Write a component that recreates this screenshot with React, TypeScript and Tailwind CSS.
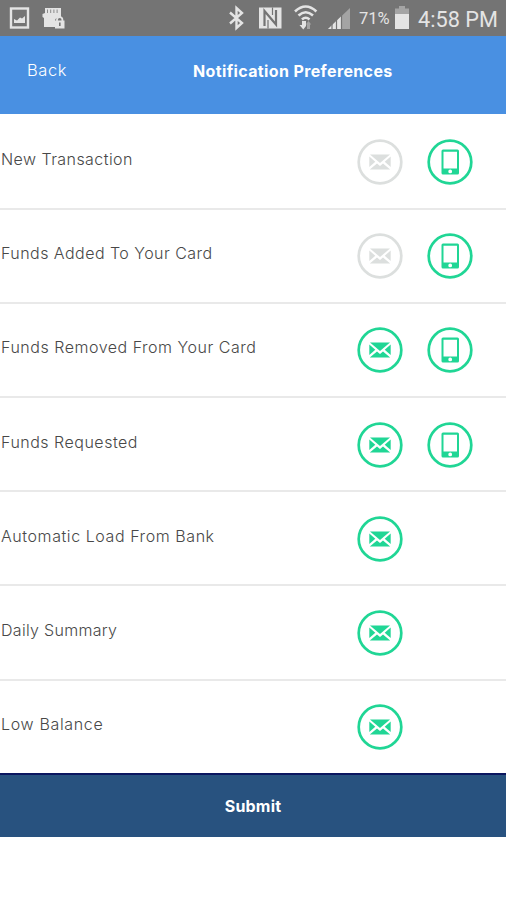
import React from "react";

interface Preference {
  label: string;
  tracking: string;
  email: boolean;
  phone: boolean;
}

const preferences: Preference[] = [
  { label: "New Transaction", tracking: "tracking-[0.44px]", email: false, phone: true },
  { label: "Funds Added To Your Card", tracking: "tracking-[0.46px]", email: false, phone: true },
  { label: "Funds Removed From Your Card", tracking: "tracking-[0.52px]", email: true, phone: true },
  { label: "Funds Requested", tracking: "tracking-[0.5px]", email: true, phone: true },
  { label: "Automatic Load From Bank", tracking: "tracking-[0.57px]", email: true, phone: false },
  { label: "Daily Summary", tracking: "tracking-[0.3px]", email: true, phone: false },
  { label: "Low Balance", tracking: "tracking-[0.66px]", email: true, phone: false },
];

const MailIcon = () => (
  <svg width="46" height="46" viewBox="0 0 46 46" fill="none">
    <circle cx="23" cy="23" r="21.3" stroke="currentColor" strokeWidth="2.7" />
    <path d="M13 15.5H33L23 24Z" fill="currentColor" />
    <path d="M12.3 17.5L18.300 22.800L12.300 28Z" fill="currentColor" />
    <path d="M33.700 17.500L27.700 22.800L33.700 28Z" fill="currentColor" />
    <path d="M12.800 30.500L20 24.400L23 27L26 24.400L33.200 30.500Z" fill="currentColor" />
  </svg>
);

const PhoneIcon = () => (
  <svg width="46" height="46" viewBox="0 0 46 46" fill="none">
    <circle cx="23" cy="23" r="21.3" stroke="currentColor" strokeWidth="2.7" />
    <path
      fillRule="evenodd"
      d="M16 10.500H30.500Q32 10.500 32 12V34Q32 35.500 30.500 35.500H16Q14.500 35.500 14.500 34V12Q14.500 10.500 16 10.500ZM16.500 12.800V29.500H30V12.800ZM23.200 30.500A1.900 1.900 0 1 0 23.200 34.300A1.900 1.900 0 1 0 23.200 30.500Z"
      fill="currentColor"
    />
  </svg>
);

const StatusBar = () => (
  <div className="flex h-9 items-center bg-[#747474] text-[#e4e4e4]">
    <svg width="72" height="36" viewBox="0 0 72 36" fill="none">
      {/* gallery */}
      <rect x="11" y="8.5" width="17" height="19" stroke="currentColor" strokeWidth="2.4" />
      <path d="M14 23V19L17 20.5L20 17.5L22 18.5L25 16V23Z" fill="currentColor" />
      {/* sd card with lock */}
      <path d="M45 8H61V17.5H59Q55 17.5 55 21V27H44V18L42.5 17V14L45 13Z" fill="currentColor" />
      <path d="M47.5 9.500V13M50.700 9.500V13M53.900 9.500V13M57.100 9.500V13" stroke="#8c8c8c" strokeWidth="1" />
      <path d="M57 21V19.8A2.7 2.7 0 0 1 62.4 19.8V21" stroke="currentColor" strokeWidth="1.8" />
      <rect x="55" y="20.5" width="9.5" height="8" fill="currentColor" />
      <path d="M59.8 22.5V26" stroke="#747474" strokeWidth="1.6" />
    </svg>

    <svg className="ml-auto shrink-0" width="130" height="36" viewBox="222 0 130 36" fill="none">
      {/* bluetooth */}
      <path d="M230 12.5L242 23L236.5 28V8L242 13L230 23.5" stroke="currentColor" strokeWidth="2.4" />
      {/* nfc */}
      <rect x="259" y="7.5" width="22.5" height="21" fill="currentColor" />
      <path d="M264.5 26V11L276 24.5V10" stroke="#747474" strokeWidth="2.2" />
      <path d="M268 28.5V20M272.5 7.5V15" stroke="#747474" strokeWidth="1.2" />
      {/* wifi */}
      <path
        d="M295 11.500Q305.700 1.500 316.400 11.500M298.500 15.500Q305.700 9 313 15.500M302 19.500Q305.700 16 309.500 19.500"
        stroke="currentColor"
        strokeWidth="2.6"
      />
      <path d="M302 21V25H299.500L303.300 29.500L306 26V21Z" fill="currentColor" />
      <path d="M307 29V24.500H305.800L308.500 21L311.200 24.500H310V29Z" fill="#a4a4a4" />
      {/* signal */}
      <path d="M328 29L350 8V29Z" fill="#a4a4a4" />
      <path d="M328 29L341 16.600V29Z" fill="currentColor" />
      <path d="M332 20V30M336.500 16V30M341.500 12V30" stroke="#747474" strokeWidth="1.2" />
    </svg>

    <span className="ml-[7px] w-[32px] shrink-0 whitespace-nowrap pt-[2px] font-[Roboto,sans-serif] text-[16.5px]">
      71%
    </span>
    <svg className="ml-[3px] shrink-0" width="16" height="36" viewBox="0 0 16 36">
      <path d="M5 6H11V8.500H15V15H1V8.500H5Z" fill="#a4a4a4" />
      <rect x="1" y="14" width="14" height="15" fill="currentColor" />
    </svg>
    <span className="ml-[8px] mr-[8px] w-[80px] shrink-0 whitespace-nowrap pt-[4px] font-[Roboto,sans-serif] text-[21.7px]">
      4:58 PM
    </span>
  </div>
);

const PreferenceRow: React.FC<{ item: Preference; last: boolean }> = ({
  item,
  last,
}) => (
  <div
    className={`flex items-center ${last ? "h-[92.3px]" : "h-[94.2px] border-b-2 border-[#e9e9e9]"}`}
  >
    <span
      className={`w-[357px] shrink-0 pb-[5px] pl-px text-[16px] font-light whitespace-nowrap text-[#484848] ${item.tracking}`}
    >
      {item.label}
    </span>
    <div className="flex gap-6 pt-[1px]">
      <button className={item.email ? "text-[#20d695]" : "text-[#dcdfde]"}>
        <MailIcon />
      </button>
      {item.phone && (
        <button className="text-[#20d695]">
          <PhoneIcon />
        </button>
      )}
    </div>
  </div>
);

const App: React.FC = () => {
  return (
    <div className="h-[900px] w-[506px] overflow-hidden bg-white font-[Inter,sans-serif]">
      <StatusBar />

      {/* HEADER */}
      <header className="flex h-[78.4px] items-center bg-[#4990e2] pb-[9px] text-white">
        <button className="w-[193px] pl-[27px] text-left text-[16.5px] font-light tracking-[0.6px]">
          Back
        </button>
        <h1 className="text-[16px] font-bold tracking-[0.37px] whitespace-nowrap">
          Notification Preferences
        </h1>
      </header>

      {/* PREFERENCES */}
      <div className="pt-[1px]">
        {preferences.map((item, i) => (
          <PreferenceRow
            key={item.label}
            item={item}
            last={i === preferences.length - 1}
          />
        ))}
      </div>

      <button className="flex h-[64px] w-full items-center justify-center border-t-2 border-[#0b1660] bg-[#28527f] text-[16px] font-bold tracking-[0.2px] text-white">
        Submit
      </button>
    </div>
  );
};

export default App;
